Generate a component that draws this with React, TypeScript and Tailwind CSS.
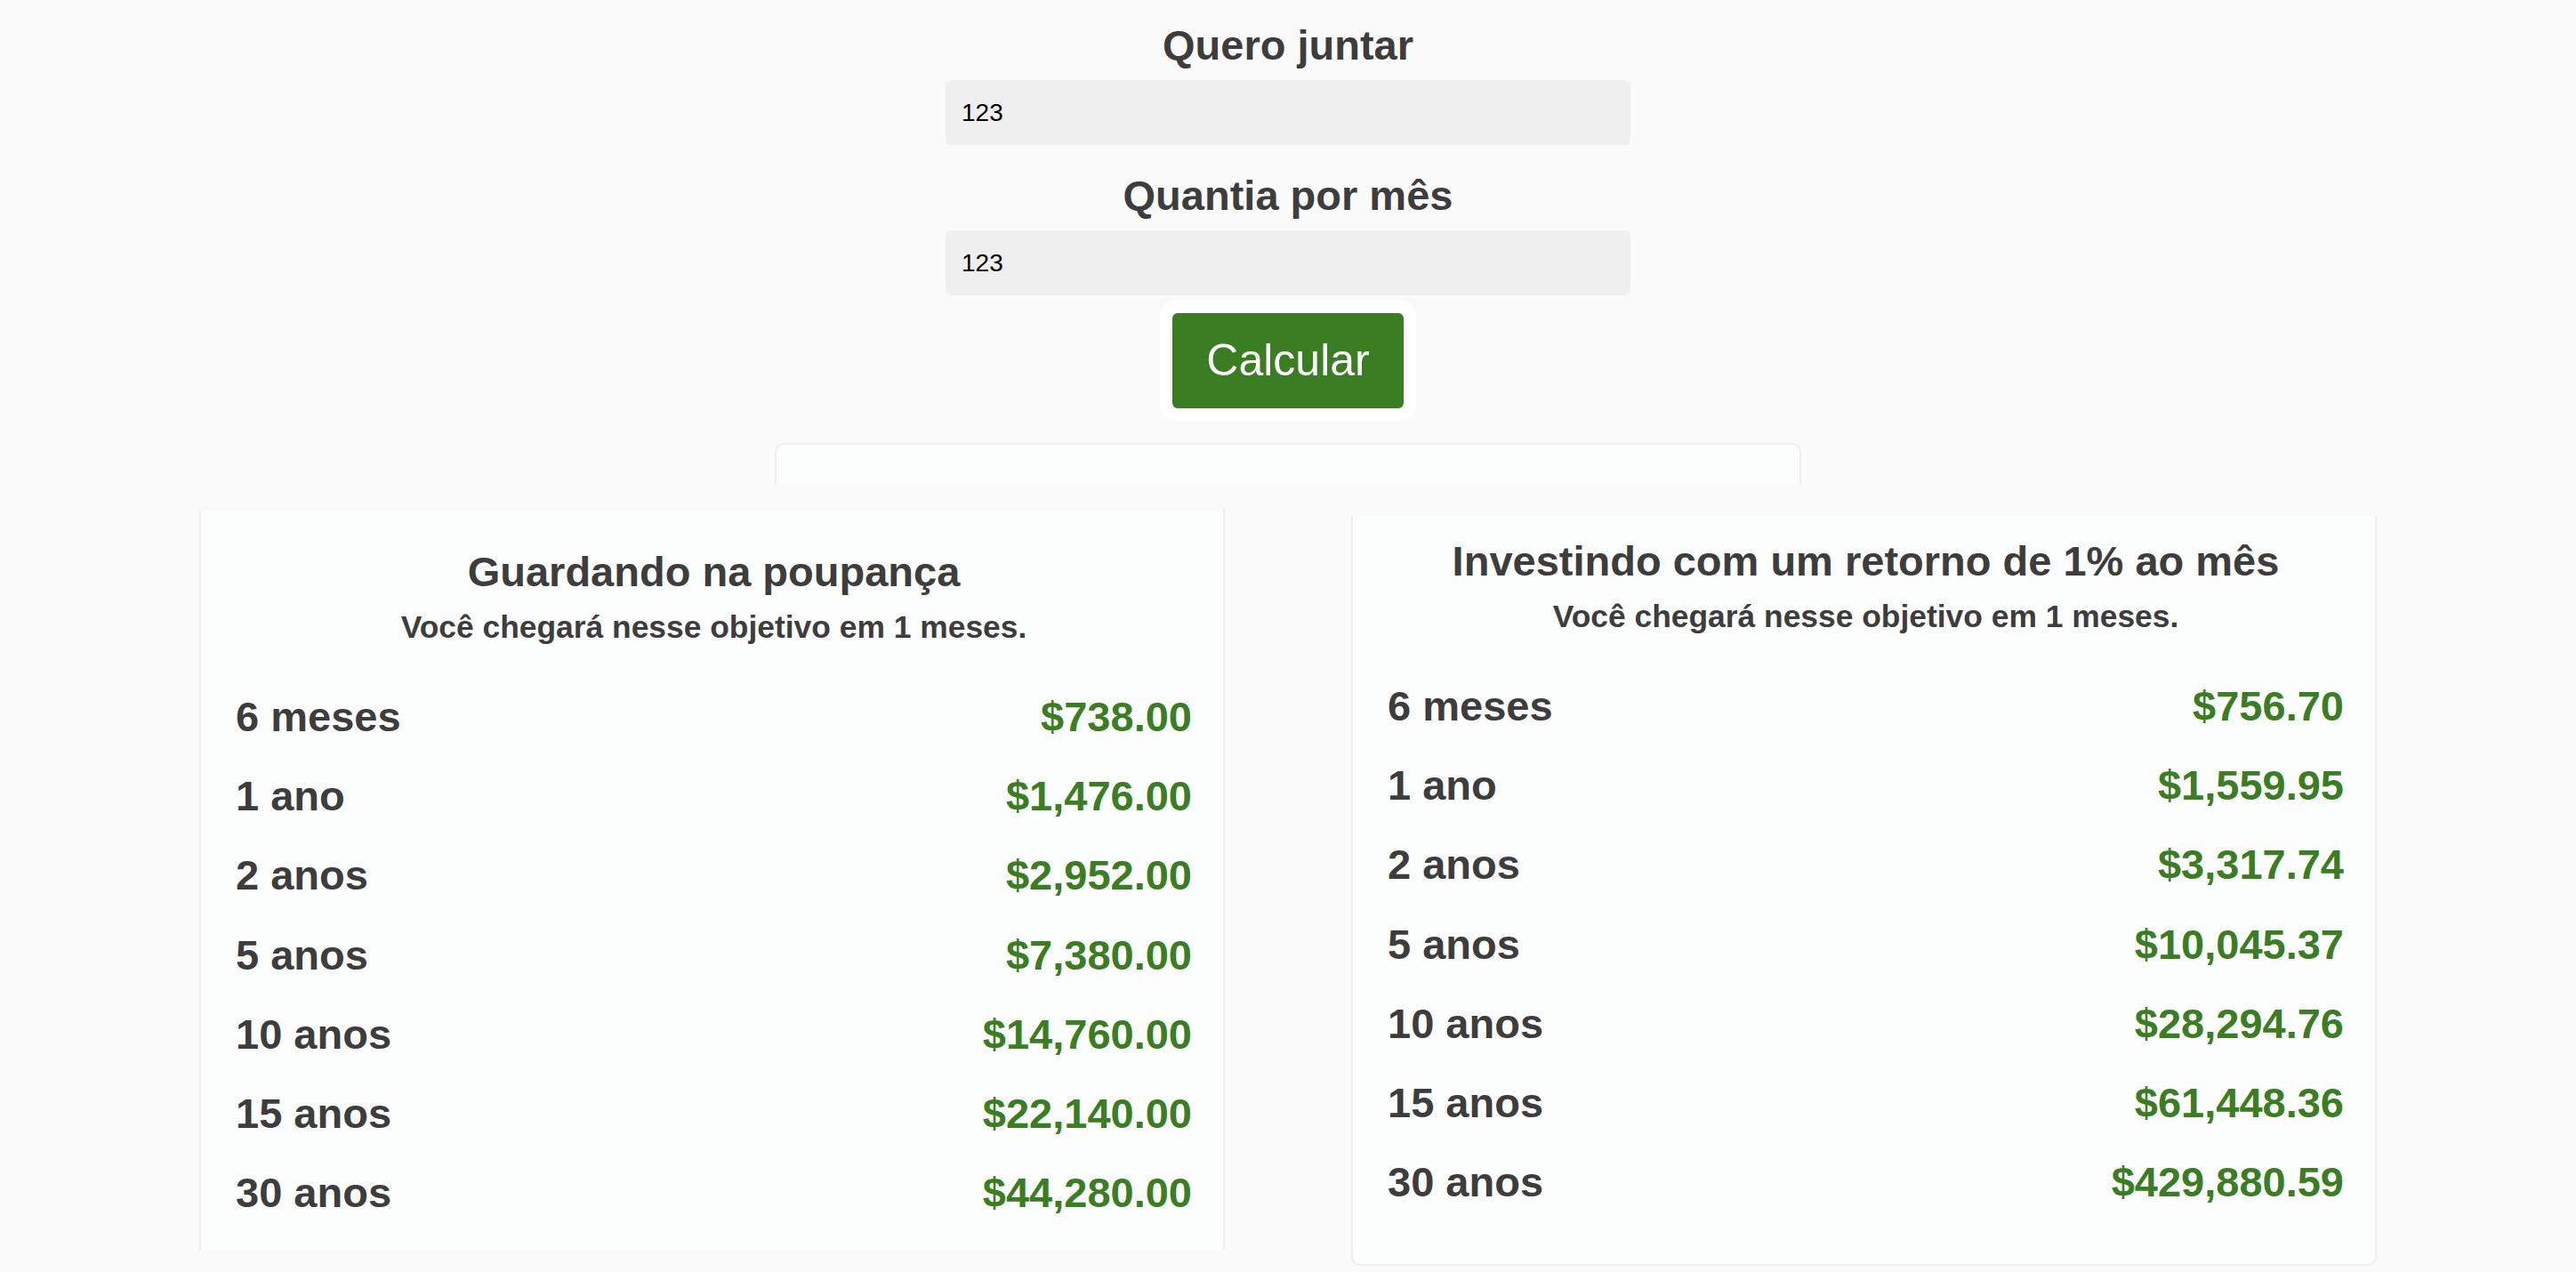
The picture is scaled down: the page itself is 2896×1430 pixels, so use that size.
import React from 'react';

type Row = { label: string; value: string };

const poupanca: Row[] = [
  { label: '6 meses', value: '$738.00' },
  { label: '1 ano', value: '$1,476.00' },
  { label: '2 anos', value: '$2,952.00' },
  { label: '5 anos', value: '$7,380.00' },
  { label: '10 anos', value: '$14,760.00' },
  { label: '15 anos', value: '$22,140.00' },
  { label: '30 anos', value: '$44,280.00' },
];

const investindo: Row[] = [
  { label: '6 meses', value: '$756.70' },
  { label: '1 ano', value: '$1,559.95' },
  { label: '2 anos', value: '$3,317.74' },
  { label: '5 anos', value: '$10,045.37' },
  { label: '10 anos', value: '$28,294.76' },
  { label: '15 anos', value: '$61,448.36' },
  { label: '30 anos', value: '$429,880.59' },
];

function Field({ label, value, first }: { label: string; value: string; first?: boolean }) {
  return (
    <div className={first ? 'flex flex-col items-center' : 'flex flex-col items-center mt-[28px]'}>
      <h3 className="text-[47px] leading-[58px] font-bold text-[#3d3d3d]">{label}</h3>
      <input
        readOnly
        value={value}
        className="mt-[10px] w-[770px] h-[73px] rounded-[6px] bg-[#efefef] px-[18px] text-[28px] text-black outline-none"
        style={{ fontFamily: '"Liberation Sans", Arial, sans-serif' }}
      />
    </div>
  );
}

function ResultCard({
  title,
  rows,
  className,
}: {
  title: string;
  rows: Row[];
  className: string;
}) {
  return (
    <div className={className}>
      <h2 className="text-center text-[47px] leading-[58px] font-bold text-[#3d3d3d]">{title}</h2>
      <p className="mt-[12px] text-center text-[35.4px] leading-[43px] font-bold text-[#3d3d3d]">
        Você chegará nesse objetivo em 1 meses.
      </p>
      <ul className="mt-[34px] flex flex-col">
        {rows.map((r) => (
          <li key={r.label} className="h-[89.3px] flex items-center justify-between">
            <span className="text-[47px] leading-[58px] font-bold text-[#3d3d3d]">{r.label}</span>
            <span className="text-[47px] leading-[58px] font-bold text-[#3a7d23]">{r.value}</span>
          </li>
        ))}
      </ul>
    </div>
  );
}

export default function App() {
  return (
    <div
      className="min-h-[1430px] bg-[#fafafa] overflow-hidden"
      style={{ fontFamily: '"Liberation Sans", Arial, Helvetica, sans-serif' }}
    >
      <div className="flex flex-col items-center pt-[22px]">
        <Field label="Quero juntar" value="123" first />
        <Field label="Quantia por mês" value="123" />
        <button className="mt-[20px] w-[260px] h-[107px] rounded-[6px] bg-[#3a7d23] text-white text-[50px] shadow-[0_0_0_14px_#fefefe]">
          Calcular
        </button>
        <div className="mt-[39px] w-[1154px] h-[46px] rounded-t-[10px] border-[2px] border-b-0 border-[#eeeeee] bg-[#fcfdfd]" />
      </div>

      <div className="flex justify-center items-start gap-[142px] mt-[29px]">
        <ResultCard
          title="Guardando na poupança"
          rows={poupanca}
          className="w-[1153px] border-x-[2px] border-[#eeeeee] bg-[#fcfdfd] pl-[39px] pr-[35px] pt-[41px] pb-[20px]"
        />
        <ResultCard
          title="Investindo com um retorno de 1% ao mês"
          rows={investindo}
          className="w-[1153px] mt-[7px] border-x-[2px] border-b-[2px] rounded-b-[10px] border-[#eeeeee] bg-[#fcfdfd] pl-[39px] pr-[35px] pt-[22px] pb-[47px]"
        />
      </div>
    </div>
  );
}
